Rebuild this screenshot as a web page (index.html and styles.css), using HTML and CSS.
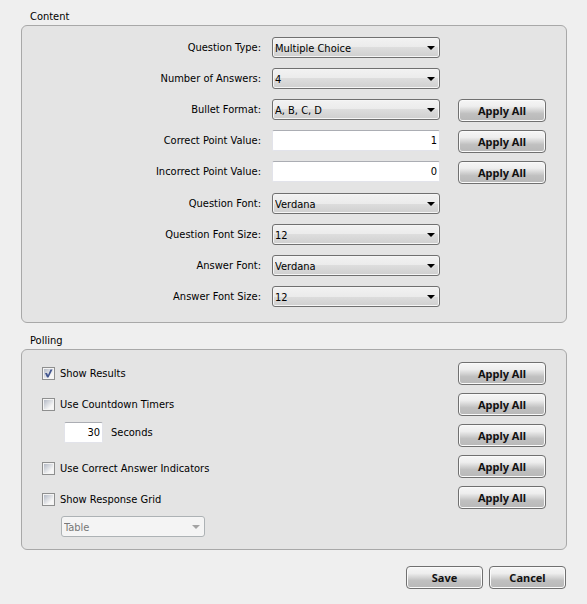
FILE: index.html
```html
<!DOCTYPE html>
<html lang="en">
<head>
<meta charset="utf-8">
<title>Question Settings</title>
<link rel="stylesheet" href="styles.css">
</head>
<body>
<form class="settings">
  <h2 class="title">Content</h2>
  <section class="panel content">
    <div class="fields">
      <label for="qtype">Question Type:</label>
      <div class="drop"><select id="qtype"><option>Multiple Choice</option></select></div>
      <label for="count">Number of Answers:</label>
      <div class="drop"><select id="count"><option>4</option></select></div>
      <label for="bullet">Bullet Format:</label>
      <div class="drop"><select id="bullet"><option>A, B, C, D</option></select></div>
      <button type="button">Apply All</button>
      <label for="correct">Correct Point Value:</label>
      <input class="num" type="text" id="correct" value="1">
      <button type="button">Apply All</button>
      <label for="incorrect">Incorrect Point Value:</label>
      <input class="num" type="text" id="incorrect" value="0">
      <button type="button">Apply All</button>
    </div>
    <div class="fields">
      <label for="qfont">Question Font:</label>
      <div class="drop"><select id="qfont"><option>Verdana</option></select></div>
      <label for="qsize">Question Font Size:</label>
      <div class="drop"><select id="qsize"><option>12</option></select></div>
      <label for="afont">Answer Font:</label>
      <div class="drop"><select id="afont"><option>Verdana</option></select></div>
      <label for="asize">Answer Font Size:</label>
      <div class="drop"><select id="asize"><option>12</option></select></div>
    </div>
  </section>

  <h2 class="title">Polling</h2>
  <section class="panel polling">
    <div class="options">
      <label class="check"><span class="box"><input type="checkbox" checked><svg class="tick" viewBox="0 0 13 13" width="13" height="13" aria-hidden="true"><path d="M3 6 5 6 6 8 8.5 2.5 10.5 2.5 6.5 10.5 5 10.5Z" fill="#42568f"/></svg></span>Show Results</label>
      <div class="group timers">
        <label class="check"><span class="box"><input type="checkbox"></span>Use Countdown Timers</label>
        <div class="seconds"><input class="num" type="text" id="secs" value="30"><label for="secs">Seconds</label></div>
      </div>
      <label class="check"><span class="box"><input type="checkbox"></span>Use Correct Answer Indicators</label>
      <div class="group">
        <label class="check"><span class="box"><input type="checkbox"></span>Show Response Grid</label>
        <div class="drop off"><select aria-label="Response grid style" disabled><option>Table</option></select></div>
      </div>
    </div>
    <div class="applies">
      <button type="button">Apply All</button>
      <button type="button">Apply All</button>
      <button type="button">Apply All</button>
      <button type="button">Apply All</button>
      <button type="button">Apply All</button>
    </div>
  </section>

  <div class="actions">
    <button type="submit">Save</button>
    <button type="button">Cancel</button>
  </div>
</form>
</body>
</html>
```
FILE: styles.css
```css
* { box-sizing: border-box; }

body {
  margin: 0;
  background: #efefef;
  color: #000;
  font: 11px/21px "DejaVu Sans Condensed", "DejaVu Sans", sans-serif;
}

.settings { padding: 9px 20px 0 21px; }

.title {
  margin: 0 0 0 9px;
  font-size: 11px;
  line-height: 16px;
  font-weight: normal;
}

.panel {
  background: #e4e4e4;
  border: 1px solid #a8a8a8;
  border-radius: 6px;
}

.content {
  display: flex;
  flex-direction: column;
  gap: 9px;
  padding: 11px 20px 13px;
  margin-bottom: 10px;
}

.fields {
  display: grid;
  grid-template-columns: 1fr 168px 106px;
  grid-auto-rows: 23px;
  row-gap: 8px;
}

.fields label {
  grid-column: 1;
  padding-right: 11px;
  text-align: right;
}

.fields button {
  width: 88px;
  justify-self: end;
}

.drop {
  position: relative;
  height: 21px;
}

.drop::after {
  content: "";
  position: absolute;
  right: 5px;
  top: 9px;
  border: 4px solid transparent;
  border-top-color: #000;
  border-bottom: 0;
  pointer-events: none;
}

select {
  appearance: none;
  display: block;
  width: 100%;
  height: 21px;
  padding: 0 2px;
  border: 1px solid #707070;
  border-radius: 3px;
  background: linear-gradient(#f2f2f2, #ebebeb 50%, #dddddd 50%, #cfcfcf);
  box-shadow: inset 0 0 0 1px #f5f5f5;
  color: #000;
  font: inherit;
}

.off { width: 144px; }
.off::after { border-top-color: #a3a3a3; }
.off select {
  border-color: #adb2b5;
  background: #f4f4f4;
  color: #777;
  opacity: 1;
}

.num {
  width: 100%;
  height: 21px;
  padding: 0 2px;
  border: 1px solid #e2e3ea;
  border-top-color: #abadb3;
  border-radius: 2px;
  background: #fff;
  color: #000;
  font: inherit;
  text-align: right;
}

button {
  height: 23px;
  padding: 0;
  border: 1px solid #707070;
  border-radius: 4px;
  background: linear-gradient(#f6f6f6, #eeeeee 30%, #c0c0c0 65%, #b8b8b8);
  box-shadow: inset 0 0 0 1px #fafafa;
  color: #111;
  font: bold 11px/20px "Noto Sans", "Open Sans", sans-serif;
}

.polling {
  display: flex;
  justify-content: space-between;
  padding: 12px 20px 12px;
}

.options {
  display: flex;
  flex-direction: column;
  gap: 9px;
}

.timers { margin-bottom: 5px; }

.check {
  display: flex;
  align-items: center;
  gap: 5px;
  height: 22px;
}

.box {
  position: relative;
  width: 13px;
  height: 13px;
}

.box input {
  appearance: none;
  display: block;
  width: 13px;
  height: 13px;
  margin: 0;
  padding: 1px;
  border: 1px solid #8e8f8f;
  background: linear-gradient(135deg, #b4bac6, #f6f6f6 75%) content-box, #f4f4f4;
}

.tick {
  position: absolute;
  left: 0;
  top: 0;
  pointer-events: none;
}

.seconds {
  display: flex;
  gap: 8px;
  margin: 7px 0 0 22px;
}

.seconds .num { width: 39px; }

.group .drop { margin: 6px 0 0 19px; }

.applies {
  display: flex;
  flex-direction: column;
  gap: 8px;
  width: 88px;
}

.actions {
  display: flex;
  justify-content: flex-end;
  gap: 6px;
  margin-top: 16px;
  padding-right: 1px;
}

.actions button { width: 77px; }
```
